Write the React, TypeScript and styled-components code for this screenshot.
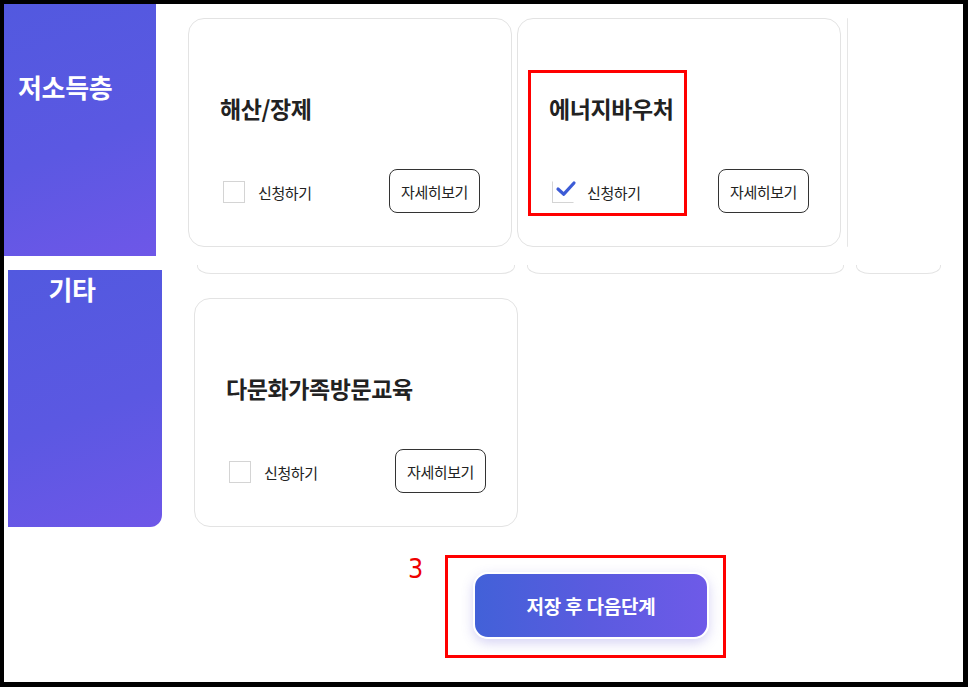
import React from "react";
import styled, { createGlobalStyle } from "styled-components";

const GlobalStyle = createGlobalStyle`
  html, body {
    margin: 0;
    padding: 0;
    background: #000;
  }
  body {
    font-family: "Noto Sans CJK KR", "Noto Sans", sans-serif;
  }
`;

const Frame = styled.div`
  width: 968px;
  height: 687px;
  box-sizing: border-box;
  border-style: solid;
  border-color: #000;
  border-width: 4px 5px 5px 4px;
  background: #fff;
  overflow: hidden;
  display: flex;
  flex-direction: column;
`;

const Section = styled.div<{ $top?: number; $left?: number }>`
  display: flex;
  align-items: flex-start;
  margin-top: ${(p) => p.$top ?? 0}px;
  padding-left: ${(p) => p.$left ?? 0}px;
`;

const Label = styled.div<{ $w: number; $h: number; $round?: boolean; $pad: number; $center?: boolean }>`
  flex: none;
  width: ${(p) => p.$w}px;
  height: ${(p) => p.$h}px;
  box-sizing: border-box;
  padding-top: ${(p) => p.$pad}px;
  padding-left: ${(p) => (p.$center ? 0 : 14)}px;
  padding-right: ${(p) => (p.$center ? 26 : 0)}px;
  text-align: ${(p) => (p.$center ? "center" : "left")};
  background: linear-gradient(160deg, #5259df 0%, #5b58e2 55%, #6e57e8 100%);
  border-bottom-right-radius: ${(p) => (p.$round ? 12 : 0)}px;
  color: #fff;
  font-size: 26px;
  font-weight: 700;
  letter-spacing: -0.3px;
  line-height: 1;
`;

const Cards = styled.div<{ $left: number; $top: number }>`
  display: flex;
  flex-direction: column;
  margin-left: ${(p) => p.$left}px;
  padding-top: ${(p) => p.$top}px;
`;

const CardRow = styled.div`
  display: flex;
  gap: 5px;
`;

const Card = styled.div`
  flex: none;
  width: 324px;
  height: 229px;
  box-sizing: border-box;
  border: 1px solid #e3e3e3;
  border-radius: 16px;
  background: #fff;
  padding: 0 31px 0 31px;
  display: flex;
  flex-direction: column;
`;

const GhostCard = styled.div`
  flex: 1;
  height: 229px;
  border-left: 1px solid #e6e6e6;
  border-radius: 16px 0 0 16px;
  margin-left: 1px;
`;

const Title = styled.h3`
  margin: 74px 0 0 0;
  font-size: 23px;
  font-weight: 700;
  color: #222;
  letter-spacing: -0.4px;
  line-height: 30px;
  position: relative;
  z-index: 1;
`;

const Footer = styled.div`
  margin-top: 48px;
  display: flex;
  align-items: center;
  justify-content: space-between;
`;

const Apply = styled.label`
  display: flex;
  align-items: center;
  gap: 13px;
  padding-left: 3px;
  font-size: 15px;
  color: #222;
  letter-spacing: -0.4px;
  position: relative;
  z-index: 1;
`;

const Box = styled.span<{ $checked?: boolean }>`
  width: 22px;
  height: 22px;
  box-sizing: border-box;
  border: 1px solid #d4d4d4;
  border-top-color: ${(p) => (p.$checked ? "transparent" : "#d4d4d4")};
  border-right-color: ${(p) => (p.$checked ? "transparent" : "#d4d4d4")};
  background: #fff;
  display: flex;
  align-items: center;
  justify-content: center;
`;

const DetailButton = styled.button`
  width: 91px;
  height: 44px;
  box-sizing: border-box;
  border: 1px solid #333;
  border-radius: 8px;
  background: #fff;
  font-family: inherit;
  font-size: 15px;
  color: #222;
  letter-spacing: -0.4px;
  padding: 0;
  margin-top: -2px;
`;

const PeekRow = styled.div`
  display: flex;
  gap: 12px;
  padding-left: 3px;
  margin-top: -5px;
`;

const Peek = styled.div<{ $w: number }>`
  flex: none;
  width: ${(p) => p.$w}px;
  height: 8px;
  border: 1px solid #e4e4e4;
  border-top: none;
  border-radius: 0 0 14px 14px / 0 0 8px 8px;
`;

const Highlight = styled.div<{ $w: number; $h: number; $x: number; $y: number }>`
  position: absolute;
  left: ${(p) => p.$x}px;
  top: ${(p) => p.$y}px;
  width: ${(p) => p.$w}px;
  height: ${(p) => p.$h}px;
  box-sizing: border-box;
  border: 3px solid #f00;
  pointer-events: none;
`;

const CardWrap = styled.div`
  position: relative;
  display: flex;
`;

const Spacer = styled.div`
  height: 24px;
`;

const Bottom = styled.div`
  display: flex;
  align-items: flex-start;
  margin-top: 28px;
  padding-left: 404px;
`;

const StepNo = styled.span`
  font-family: "DejaVu Sans", sans-serif;
  font-size: 24px;
  color: #e00;
  line-height: 1;
  margin-top: 2px;
  width: 37px;
  transform: scaleY(1.12);
`;

const SaveArea = styled.div`
  width: 281px;
  height: 103px;
  box-sizing: border-box;
  border: 3px solid #f00;
  display: flex;
  align-items: flex-start;
  padding-top: 14px;
  padding-left: 25px;
`;

const SaveButton = styled.button`
  width: 236px;
  height: 67px;
  box-sizing: border-box;
  border: 2px solid #fff;
  border-radius: 15px;
  background: linear-gradient(90deg, #4261d8 0%, #5a5bdf 50%, #6e5ae8 100%);
  box-shadow: 0 4px 12px rgba(90, 80, 210, 0.25);
  color: #fff;
  font-family: inherit;
  font-size: 19px;
  font-weight: 700;
  letter-spacing: -0.2px;
`;

const Check = () => (
  <svg width="22" height="18" viewBox="0 0 22 18" style={{ marginTop: -6, marginRight: -5 }}>
    <path d="M3 9 L8.8 14.2 L19 3" fill="none" stroke="#3c5bd6" strokeWidth="3.2" strokeLinecap="round" strokeLinejoin="round" />
  </svg>
);

type ItemProps = { title: string; checked?: boolean };

const Item = ({ title, checked }: ItemProps) => (
  <Card>
    <Title>{title}</Title>
    <Footer>
      <Apply>
        <Box $checked={checked}>{checked && <Check />}</Box>
        신청하기
      </Apply>
      <DetailButton>자세히보기</DetailButton>
    </Footer>
  </Card>
);

export default function App() {
  return (
    <>
      <GlobalStyle />
      <Frame>
        <Section>
          <Label $w={152} $h={252} $pad={70}>
            저소득층
          </Label>
          <Cards $left={32} $top={14}>
            <CardRow>
              <Item title="해산/장제" />
              <CardWrap>
                <Item title="에너지바우처" checked />
                <Highlight $x={11} $y={52} $w={159} $h={146} />
              </CardWrap>
              <GhostCard />
            </CardRow>
          </Cards>
        </Section>
        <Section $top={14} $left={4}>
          <Label $w={154} $h={257} $round $pad={6} $center>
            기타
          </Label>
          <Cards $left={32} $top={0}>
            <PeekRow>
              <Peek $w={316} />
              <Peek $w={315} />
              <Peek $w={83} />
            </PeekRow>
            <Spacer />
            <Item title="다문화가족방문교육" />
          </Cards>
        </Section>
        <Bottom>
          <StepNo>3</StepNo>
          <SaveArea>
            <SaveButton>저장 후 다음단계</SaveButton>
          </SaveArea>
        </Bottom>
      </Frame>
    </>
  );
}
